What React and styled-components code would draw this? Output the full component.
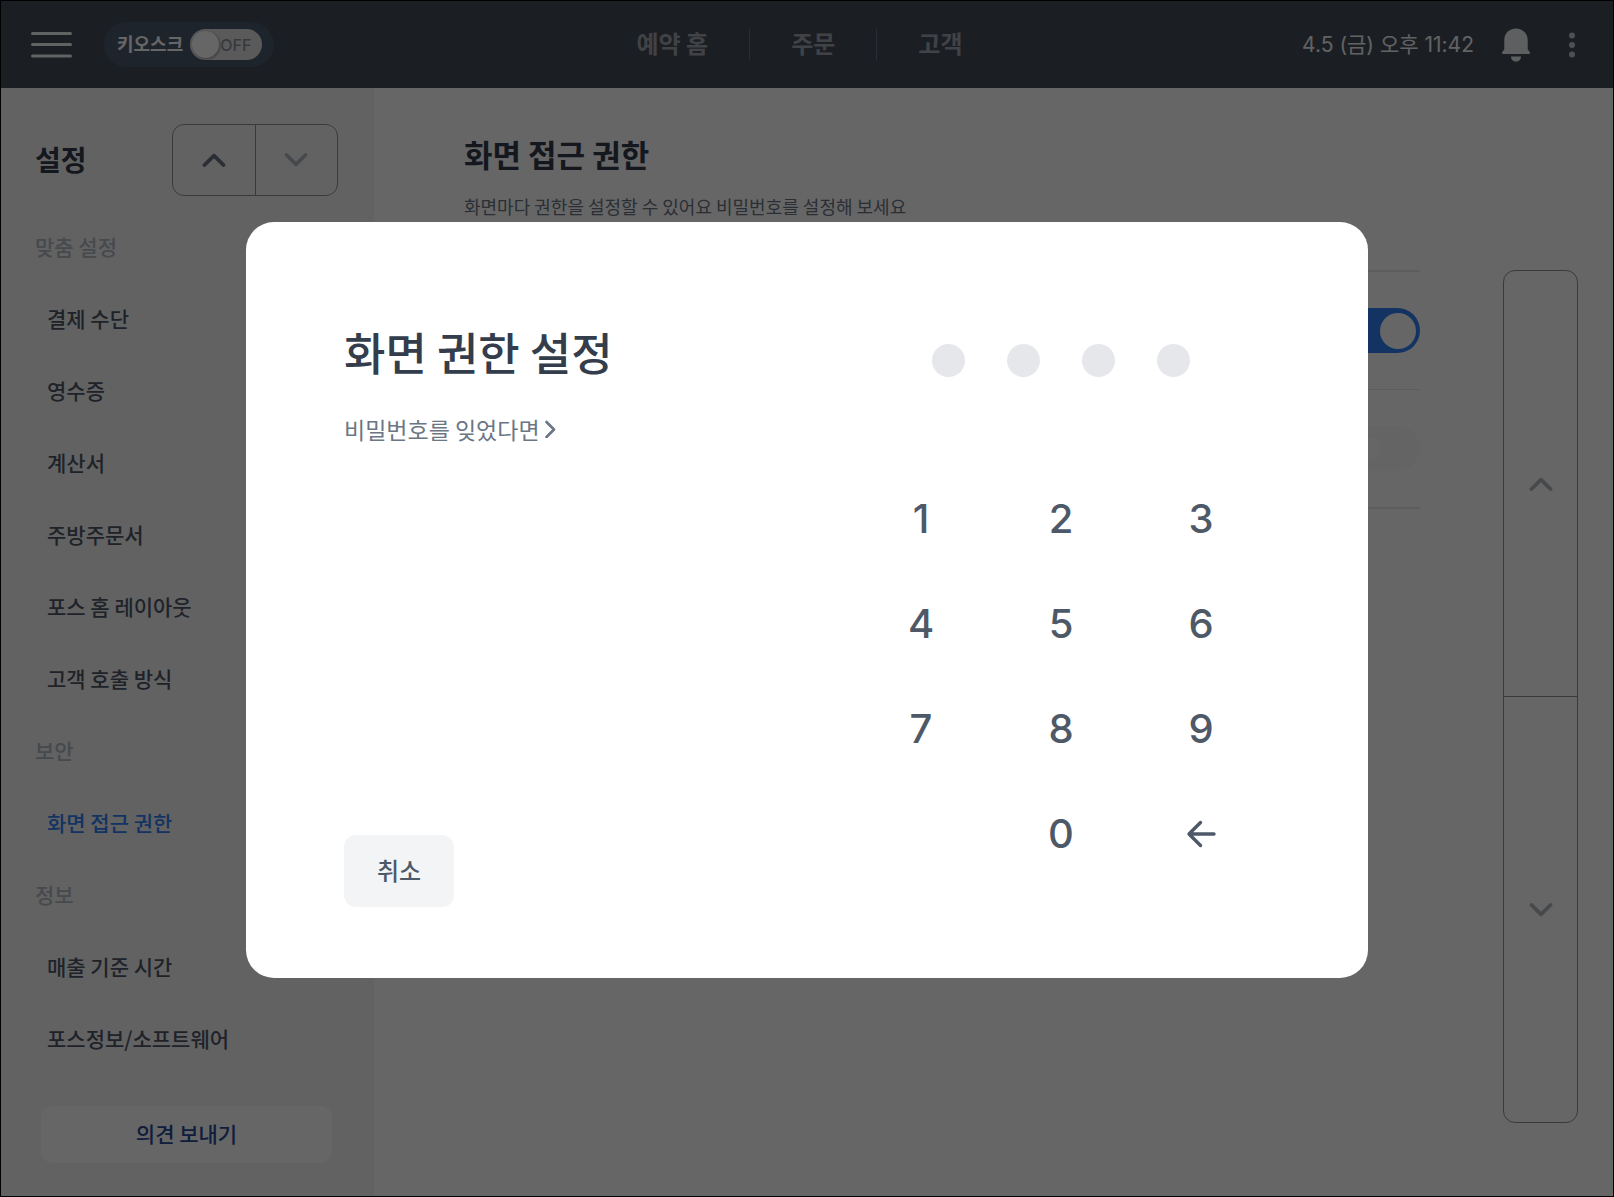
import React, { useState } from "react";
import styled, { createGlobalStyle } from "styled-components";

const GlobalStyle = createGlobalStyle`
  * {
    box-sizing: border-box;
  }

  body {
    margin: 0;
    font-family: "Noto Sans CJK KR", sans-serif;
    color: #333d4b;
    background-color: #ffffff;
  }

  button {
    font-family: inherit;
    border: none;
    padding: 0;
    background: none;
    cursor: pointer;
  }

  svg {
    display: block;
  }
`;

const Page = styled.div`
  min-height: 100vh;
  display: flex;
  flex-direction: column;
  border: 1px solid #000000;
`;

const Header = styled.header`
  height: 87px;
  display: grid;
  grid-template-columns: 1fr auto 1fr;
  align-items: center;
  padding: 0 45px 0 30px;
  background-color: #444c58;
`;

const HeaderLeft = styled.div`
  display: flex;
  align-items: center;
  gap: 32px;
`;

const HeaderRight = styled.div`
  display: flex;
  align-items: center;
  justify-content: flex-end;
  gap: 28px;
  margin-right: -18px;
`;

const IconButton = styled.button`
  display: flex;
  align-items: center;
  justify-content: center;
  min-width: 28px;
`;

const Kiosk = styled.label`
  height: 45px;
  display: flex;
  align-items: center;
  gap: 7px;
  padding: 0 12px 0 13px;
  border-radius: 23px;
  background-color: #4a5a6e;
  color: #ffffff;
  font-size: 18px;
  font-weight: 700;
`;

const KioskLabel = styled.span`
  padding-bottom: 3px;
`;

const KioskSwitch = styled.span`
  width: 72px;
  height: 31px;
  display: flex;
  align-items: center;
  padding: 0 10px 0 2px;
  border-radius: 16px;
  background-color: #e0e2e4;
  color: #8b909a;
  font-family: Inter, sans-serif;
  font-size: 16px;
  font-weight: 500;
`;

const KioskInput = styled.input`
  appearance: none;
  flex-shrink: 0;
  width: 27px;
  height: 27px;
  margin: 0 1px 0 0;
  border-radius: 50%;
  background-color: #ffffff;
  box-shadow: 1px 1px 3px rgba(0, 0, 0, 0.35);
`;

const Nav = styled.nav`
  display: flex;
  align-items: center;
  gap: 41px;
`;

const NavLink = styled.a`
  padding-bottom: 3px;
  color: #a0a6af;
  font-size: 24px;
  font-weight: 700;
  line-height: 32px;
  text-decoration: none;
`;

const NavDivider = styled.span`
  width: 1px;
  height: 31px;
  background-color: #6b7684;
`;

const Clock = styled.time`
  padding-bottom: 3px;
  color: #f2f4f6;
  font-family: Inter, "Noto Sans CJK KR", sans-serif;
  font-size: 21px;
  white-space: nowrap;
`;

const Body = styled.div`
  flex: 1;
  display: flex;
`;

const Sidebar = styled.aside`
  width: 373px;
  flex-shrink: 0;
  padding: 36px 0 32px;
  background-color: #f5f5f5;
`;

const SidebarTop = styled.div`
  display: flex;
  align-items: center;
  justify-content: space-between;
  margin-bottom: 16px;
  padding: 0 36px 0 34px;
`;

const SidebarTitle = styled.h2`
  margin: 0;
  padding-bottom: 3px;
  font-size: 28px;
  font-weight: 700;
  line-height: 40px;
`;

const Stepper = styled.div`
  width: 166px;
  height: 72px;
  display: flex;
  border: 1px solid #8b95a1;
  border-radius: 12px;
`;

const StepButton = styled.button`
  flex: 1;
  display: flex;
  align-items: center;
  justify-content: center;
  color: ${({ $muted }) => ($muted ? "#b0b8c1" : "#6b7684")};

  & + & {
    border-left: 1px solid #8b95a1;
  }
`;

const Menu = styled.ul`
  margin: 0;
  padding: 0;
  list-style: none;
`;

const MenuRow = styled.li`
  height: 72px;
  display: flex;
  align-items: center;
  padding: 0 0 4px;
  padding-left: ${({ $section }) => ($section ? "34px" : "46px")};
  color: #b0b8c1;
  font-size: 21px;
  font-weight: 500;
`;

const MenuLink = styled.a`
  color: ${({ $active }) => ($active ? "#3182f6" : "#4e5968")};
  text-decoration: none;
`;

const FeedbackButton = styled.button`
  display: block;
  width: calc(100% - 82px);
  height: 57px;
  margin: 30px auto 0 40px;
  padding-bottom: 4px;
  border-radius: 12px;
  background-color: #ffffff;
  color: #2a4a96;
  font-size: 21px;
  font-weight: 500;
`;

const Content = styled.main`
  flex: 1;
  display: flex;
  flex-direction: column;
  padding: 46px 35px 73px 90px;
`;

const ContentTitle = styled.h1`
  margin: 0;
  font-size: 31px;
  font-weight: 700;
  line-height: 40px;
`;

const ContentDesc = styled.p`
  margin: 19px 0 50px;
  color: #6b7684;
  font-size: 18px;
  line-height: 27px;
`;

const ContentBody = styled.div`
  flex: 1;
  display: flex;
  gap: 83px;
`;

const Options = styled.div`
  flex: 1;
`;

const Option = styled.div`
  height: 119px;
  display: flex;
  align-items: center;
  justify-content: flex-end;
  border-top: 2px solid #e5e8eb;

  &:last-child {
    height: 120px;
    border-top-width: 1px;
    border-bottom: 2px solid #e5e8eb;
  }
`;

const Switch = styled.input`
  appearance: none;
  width: 75px;
  height: 45px;
  display: flex;
  align-items: center;
  margin: 0;
  padding: 0 4px;
  border-radius: 23px;
  background-color: #f9f9f9;

  &::before {
    content: "";
    width: 24px;
    height: 24px;
    margin-left: 8px;
    border-radius: 50%;
    background-color: #ffffff;
  }

  &:checked {
    background-color: #3182f6;
  }

  &:checked::before {
    width: 36px;
    height: 36px;
    margin-left: auto;
  }
`;

const Pager = styled.div`
  width: 75px;
  display: flex;
  flex-direction: column;
  border: 1px solid #8f9194;
  border-radius: 12px;
`;

const PagerButton = styled.button`
  flex: 1;
  display: flex;
  align-items: center;
  justify-content: center;
  color: #b0b8c1;

  & + & {
    border-top: 1px solid #8f9194;
  }
`;

const Overlay = styled.div`
  position: fixed;
  inset: 0;
  display: flex;
  align-items: center;
  justify-content: center;
  margin: 1px;
  padding: 3px 0 0;
  background-color: rgba(0, 0, 0, 0.6);
`;

const Dialog = styled.section`
  width: 1122px;
  max-width: 100%;
  min-height: 756px;
  display: flex;
  justify-content: space-between;
  padding: 102px 97px 71px 98px;
  border-radius: 28px;
  background-color: #ffffff;
`;

const DialogInfo = styled.div`
  display: flex;
  flex-direction: column;
  align-items: flex-start;
`;

const DialogTitle = styled.h2`
  margin: 0 0 33px;
  font-size: 45px;
  font-weight: 500;
  line-height: 56px;
`;

const ForgotLink = styled.a`
  display: flex;
  align-items: center;
  gap: 4px;
  color: #6b7684;
  font-size: 23px;
  line-height: 32px;
  text-decoration: none;
`;

const CancelButton = styled.button`
  width: 110px;
  height: 72px;
  margin-top: auto;
  padding-bottom: 4px;
  border-radius: 12px;
  background-color: #f2f4f6;
  color: #4e5968;
  font-size: 24px;
  font-weight: 500;
`;

const PinPad = styled.div`
  width: 420px;
  padding-top: 20px;
`;

const PinDots = styled.div`
  display: flex;
  justify-content: center;
  gap: 42px;
  margin-bottom: 89px;
`;

const PinDot = styled.span`
  width: 33px;
  height: 33px;
  border-radius: 50%;
  background-color: ${({ $filled }) => ($filled ? "#3182f6" : "#e5e7eb")};
`;

const Keys = styled.div`
  display: grid;
  grid-template-columns: repeat(3, 1fr);
  grid-auto-rows: 105px;
`;

const Key = styled.button`
  display: flex;
  align-items: center;
  justify-content: center;
  color: #4e5968;
  font-family: Inter, sans-serif;
  font-size: 40px;
  font-weight: 500;
`;

const menu = [
  { label: "맞춤 설정", section: true },
  { label: "결제 수단" },
  { label: "영수증" },
  { label: "계산서" },
  { label: "주방주문서" },
  { label: "포스 홈 레이아웃" },
  { label: "고객 호출 방식" },
  { label: "보안", section: true },
  { label: "화면 접근 권한", active: true },
  { label: "정보", section: true },
  { label: "매출 기준 시간" },
  { label: "포스정보/소프트웨어" },
];

const ChevronUp = () => (
  <svg width="24" height="14" viewBox="0 0 24 14" fill="none">
    <path d="M2.500 12 12 2.700l9.500 9.300" stroke="currentColor" strokeWidth="3.800" strokeLinecap="round" strokeLinejoin="round" />
  </svg>
);

const ChevronDown = () => (
  <svg width="24" height="14" viewBox="0 0 24 14" fill="none">
    <path d="M2.500 2 12 11.300 21.500 2" stroke="currentColor" strokeWidth="3.800" strokeLinecap="round" strokeLinejoin="round" />
  </svg>
);

const ChevronRight = () => (
  <svg width="12" height="18" viewBox="0 0 12 18" fill="none">
    <path d="M2.500 2l7.500 7.500-7.500 7.500" stroke="currentColor" strokeWidth="2.600" strokeLinecap="round" strokeLinejoin="round" />
  </svg>
);

const MenuIcon = () => (
  <svg width="41" height="28" viewBox="0 0 41 28" fill="none">
    <path d="M1.500 2.500h38M1.500 13.500h38M1.500 25h38" stroke="#f2f4f6" strokeWidth="3" strokeLinecap="round" />
  </svg>
);

const BellIcon = () => (
  <svg width="28" height="34" viewBox="0 0 28 34" fill="#eceef0">
    <path d="M14 .5C7.200.5 2.300 5.500 2.300 12v9.600L.4 23.700c-.8 1-.2 2.300 1 2.300h25.200c1.200 0 1.800-1.300 1-2.300l-1.900-2.100V12C25.700 5.500 20.800.5 14 .5z" />
    <path d="M9 28.500h10c0 3-2.200 5-5 5s-5-2-5-5z" />
  </svg>
);

const MoreIcon = () => (
  <svg width="6" height="26" viewBox="0 0 6 26" fill="#c4c8cd">
    <circle cx="3" cy="3.500" r="3" />
    <circle cx="3" cy="13" r="3" />
    <circle cx="3" cy="22.500" r="3" />
  </svg>
);

const BackIcon = () => (
  <svg width="30" height="28" viewBox="0 0 30 28" fill="none">
    <path d="M14.500 2.500 3 14l11.500 11.500M3 14h25" stroke="currentColor" strokeWidth="3.400" strokeLinecap="round" strokeLinejoin="round" />
  </svg>
);

const App = () => {
  const [pin, setPin] = useState("");

  const press = (digit) => setPin((prev) => (prev + digit).slice(0, 4));

  return (
    <>
      <GlobalStyle />
      <Page>
        <Header>
          <HeaderLeft>
            <IconButton aria-label="메뉴">
              <MenuIcon />
            </IconButton>
            <Kiosk>
              <KioskLabel>키오스크</KioskLabel>
              <KioskSwitch>
                <KioskInput type="checkbox" />
                OFF
              </KioskSwitch>
            </Kiosk>
          </HeaderLeft>
          <Nav>
            <NavLink href="#home">예약 홈</NavLink>
            <NavDivider />
            <NavLink href="#orders">주문</NavLink>
            <NavDivider />
            <NavLink href="#customers">고객</NavLink>
          </Nav>
          <HeaderRight>
            <Clock>4.5 (금) 오후 11:42</Clock>
            <IconButton aria-label="알림">
              <BellIcon />
            </IconButton>
            <IconButton aria-label="더보기">
              <MoreIcon />
            </IconButton>
          </HeaderRight>
        </Header>

        <Body>
          <Sidebar>
            <SidebarTop>
              <SidebarTitle>설정</SidebarTitle>
              <Stepper>
                <StepButton aria-label="위로">
                  <ChevronUp />
                </StepButton>
                <StepButton aria-label="아래로" $muted>
                  <ChevronDown />
                </StepButton>
              </Stepper>
            </SidebarTop>
            <Menu>
              {menu.map((item) => (
                <MenuRow key={item.label} $section={item.section}>
                  {item.section ? (
                    item.label
                  ) : (
                    <MenuLink href="#menu" $active={item.active}>
                      {item.label}
                    </MenuLink>
                  )}
                </MenuRow>
              ))}
            </Menu>
            <FeedbackButton>의견 보내기</FeedbackButton>
          </Sidebar>

          <Content>
            <ContentTitle>화면 접근 권한</ContentTitle>
            <ContentDesc>
              화면마다 권한을 설정할 수 있어요 비밀번호를 설정해 보세요
            </ContentDesc>
            <ContentBody>
              <Options>
                <Option>
                  <Switch type="checkbox" aria-label="화면 접근 권한" defaultChecked />
                </Option>
                <Option>
                  <Switch type="checkbox" aria-label="비밀번호" />
                </Option>
              </Options>
              <Pager>
                <PagerButton aria-label="이전">
                  <ChevronUp />
                </PagerButton>
                <PagerButton aria-label="다음">
                  <ChevronDown />
                </PagerButton>
              </Pager>
            </ContentBody>
          </Content>
        </Body>
      </Page>

      <Overlay>
        <Dialog role="dialog" aria-labelledby="dialog-title">
          <DialogInfo>
            <DialogTitle id="dialog-title">화면 권한 설정</DialogTitle>
            <ForgotLink href="#forgot">
              비밀번호를 잊었다면
              <ChevronRight />
            </ForgotLink>
            <CancelButton onClick={() => setPin("")}>취소</CancelButton>
          </DialogInfo>
          <PinPad>
            <PinDots>
              {[0, 1, 2, 3].map((i) => (
                <PinDot key={i} $filled={i < pin.length} />
              ))}
            </PinDots>
            <Keys>
              {["1", "2", "3", "4", "5", "6", "7", "8", "9"].map((digit) => (
                <Key key={digit} onClick={() => press(digit)}>
                  {digit}
                </Key>
              ))}
              <span />
              <Key onClick={() => press("0")}>0</Key>
              <Key aria-label="지우기" onClick={() => setPin((prev) => prev.slice(0, -1))}>
                <BackIcon />
              </Key>
            </Keys>
          </PinPad>
        </Dialog>
      </Overlay>
    </>
  );
};

export default App;
